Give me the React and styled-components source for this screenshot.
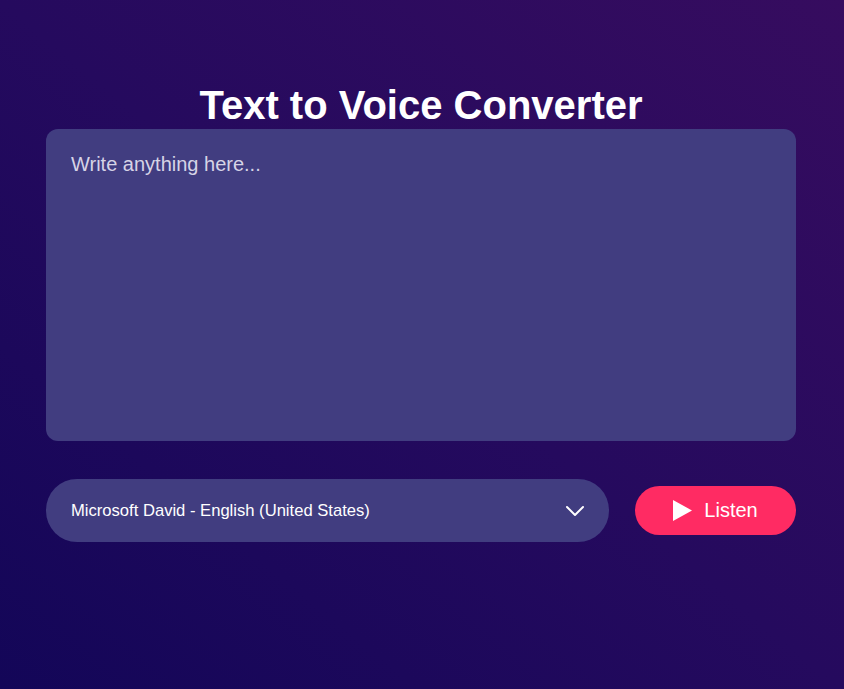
import React from 'react';
import styled, { createGlobalStyle } from 'styled-components';

const GlobalStyle = createGlobalStyle`
  html, body {
    margin: 0;
    padding: 0;
    height: 100%;
  }
  body {
    font-family: "Liberation Sans", Arial, sans-serif;
    background: linear-gradient(to top right, #130658, #250a5e 50%, #360c5f);
    min-height: 689px;
  }
`;

const Page = styled.main`
  display: flex;
  justify-content: center;
  padding: 82px 2px 0 0;
`;

const Container = styled.div`
  width: 750px;
  display: flex;
  flex-direction: column;
`;

const Title = styled.h1`
  margin: 0;
  font-size: 40px;
  line-height: 46px;
  font-weight: 700;
  color: #fff;
  text-align: center;
`;

const TextArea = styled.textarea`
  box-sizing: border-box;
  margin-top: 1px;
  width: 100%;
  height: 312px;
  padding: 24px 25px;
  border: none;
  outline: none;
  resize: none;
  border-radius: 12px;
  background: #413d80;
  color: #fff;
  font-family: inherit;
  font-size: 20px;

  &::placeholder {
    color: #d6d4e6;
  }
`;

const Controls = styled.div`
  display: flex;
  align-items: center;
  gap: 26px;
  margin-top: 38px;
`;

const SelectWrap = styled.div`
  flex: 1;
  height: 62px;
  border-radius: 31px;
  background: #413d80;
  display: flex;
  align-items: center;
  justify-content: space-between;
  padding: 1px 24px 0 25px;
  color: #fff;
  font-size: 16.6px;
`;

const ListenButton = styled.button`
  width: 161px;
  height: 49px;
  border: none;
  border-radius: 25px;
  background: #ff2b63;
  color: #fff;
  font-family: inherit;
  font-size: 20px;
  display: flex;
  align-items: center;
  justify-content: center;
  gap: 12px;
  cursor: pointer;
`;

const Chevron = () => (
  <svg width="20" height="12" viewBox="0 0 20 12" fill="none">
    <path d="M2 2l8 8 8-8" stroke="#fff" strokeWidth="2" strokeLinecap="round" strokeLinejoin="round" />
  </svg>
);

const Play = () => (
  <svg width="19" height="21" viewBox="0 0 19 21">
    <path d="M0 0L19 10.5L0 21Z" fill="#fff" />
  </svg>
);

const App = () => {
  return (
    <>
      <GlobalStyle />
      <Page>
        <Container>
          <Title>Text to Voice Converter</Title>
          <TextArea placeholder="Write anything here..." />
          <Controls>
            <SelectWrap>
              <span>Microsoft David - English (United States)</span>
              <Chevron />
            </SelectWrap>
            <ListenButton>
              <Play />
              Listen
            </ListenButton>
          </Controls>
        </Container>
      </Page>
    </>
  );
};

export default App;
